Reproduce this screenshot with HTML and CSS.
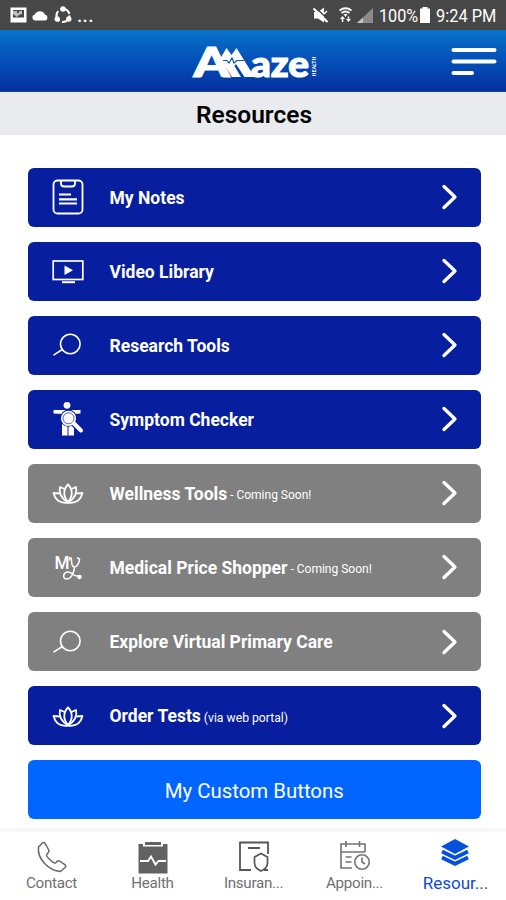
FILE: index.html
```html
<!DOCTYPE html>
<html lang="en">
<head>
<meta charset="utf-8">
<meta name="viewport" content="width=device-width, initial-scale=1">
<title>Resources</title>
<link rel="stylesheet" href="styles.css">
</head>
<body>
<svg class="defs" width="0" height="0" aria-hidden="true">
  <symbol id="chevron" viewBox="0 0 18 28"><path d="M3 3.500 14 14 3 24.500" fill="none" stroke="#fff" stroke-width="3.300" stroke-linecap="round" stroke-linejoin="round"/></symbol>
  <symbol id="search" viewBox="0 0 32 36"><g fill="none" stroke="currentColor" stroke-width="1.600" stroke-linecap="round"><circle cx="18.300" cy="17" r="9.800"/><path d="M10.300 22.500 2 27.800"/></g></symbol>
  <symbol id="lotus" viewBox="0 0 32 36"><g fill="none" stroke="currentColor" stroke-width="1.800" stroke-linejoin="round"><path d="M16 9.500c5 5 5 12 0 17.500-5-5.500-5-12.500 0-17.500Z"/><path d="M12.500 14 8 12c-1.500 6 1 11 8 15.500M19.500 14l4.500-2c1.500 6-1 11-8 15.500"/><path d="M7.800 18.500 1.500 18c1.500 6 6 9.800 12 9.800h5c6 0 10.500-3.800 12-9.800l-6.300.5"/></g></symbol>
</svg>
<div class="status">
  <div class="status-left">
    <svg width="17" height="16" viewBox="0 0 17 16"><path fill="#fff" fill-rule="evenodd" d="M.5.500h16v15H.5zM3 3v7.500h11V3z"/><path fill="#fff" d="M3 4h4v2h2V4h3v3l-3 1-2 2-4-3z" opacity=".65"/></svg>
    <svg width="17" height="11" viewBox="0 0 17 11"><path fill="#fff" d="M3.500 10.500a3 3 0 0 1-.8-5.900A5.600 5.600 0 0 1 13 4.500a3.200 3.200 0 0 1 .7 6z"/></svg>
    <svg width="18" height="18" viewBox="0 0 18 18"><circle cx="9" cy="9.500" r="6.500" fill="none" stroke="#fff" stroke-width="2.200" stroke-dasharray="11 2.600"/><circle cx="9" cy="3" r="2.700" fill="#fff"/><circle cx="3.200" cy="13" r="2.700" fill="#fff"/><circle cx="14.800" cy="13" r="2.700" fill="#fff"/></svg>
    <span class="dots">...</span>
  </div>
  <div class="status-right">
    <svg class="mute" width="17" height="17" viewBox="0 0 17 17"><path fill="#fff" d="M2 5h4l6-4.500v15L6 11.500H2z"/><path d="M3.500 .5 16.500 13" stroke="#474747" stroke-width="1.500"/><path d="M1.500 1.500 15.500 15" stroke="#fff" stroke-width="2.200"/><path d="m12 7 3-3" stroke="#fff" stroke-width="1.500"/></svg>
    <svg class="wifi" width="13" height="16" viewBox="0 0 13 16"><path d="M.5 3.500Q6.500-1 12.500 3.500M2.500 6q4-3 8 0" fill="none" stroke="#fff" stroke-width="1.800"/><path d="M4.500 7h4l-2 3zM3.500 9 1 12h1.800v3h1.500v-3H6zM9.500 15 7 12h1.700V9.500h1.600V12H12z" fill="#fff"/></svg>
    <svg class="signal" width="16" height="15" viewBox="0 0 16 15"><path d="M0 15 16 0v15z" fill="#8b8b8b"/><path d="M0 15l6-5.600V15z" fill="#c5c5c5"/></svg>
    <span class="percent">100%</span>
    <svg class="battery" width="10" height="16" viewBox="0 0 10 16"><path d="M2.500 0h5v1.500H10V16H0V1.500h2.500z" fill="#fff"/></svg>
    <span class="clock">9:24 PM</span>
  </div>
</div>
<header class="header">
  <svg class="logo" width="130" height="42" viewBox="0 0 130 42" role="img" aria-label="Amaze Health">
    <path d="M29 14 35.500 3 40.500 10 45.500 3 63.500 32H53.500L45 19l-1.500 2 6.500 11H41L33 19z"/>
    <path d="M27 15.500h9l2 2.500 3-5 2 5 3-2.500h7" fill="none" stroke="#0755bd" stroke-width="1.200"/>
    <text class="logo-a" x="2.500" y="31.500" font-size="41" textLength="36" lengthAdjust="spacingAndGlyphs">A</text>
    <text class="logo-text" x="60" y="31.500" font-size="36" textLength="58" lengthAdjust="spacingAndGlyphs">aze</text>
    <text class="logo-health" transform="translate(125 31.500) rotate(-90)" font-size="5.500" textLength="20" lengthAdjust="spacingAndGlyphs">HEALTH</text>
  </svg>
  <svg class="menu" width="46" height="30" viewBox="0 0 46 30"><path d="M2.500 3h41M2.500 14.500h41M2.500 26H21" stroke="#fff" stroke-width="4" stroke-linecap="round"/></svg>
</header>
<h1 class="title">Resources</h1>
<main class="list">
  <a class="row"><svg class="icon" viewBox="0 0 32 36"><g fill="none" stroke="currentColor" stroke-width="1.800"><rect x="1.500" y="1.500" width="29" height="33" rx="4"/><path d="M9 1.500v3q0 3 3 3h8q3 0 3-3v-3"/><path d="M7 15.500h12M7 20.300h18M7 24.500h18" stroke-width="2.200"/></g></svg><span class="label">My Notes</span><svg class="chev"><use href="#chevron"/></svg></a>
  <a class="row"><svg class="icon" viewBox="0 0 32 36"><rect x="1.200" y="8" width="29.600" height="18.500" fill="none" stroke="currentColor" stroke-width="1.700"/><path d="M12.500 12.500v9.500l8.500-4.700z" fill="currentColor"/><path d="M10 29.200h13" stroke="currentColor" stroke-width="2"/></svg><span class="label">Video Library</span><svg class="chev"><use href="#chevron"/></svg></a>
  <a class="row"><svg class="icon"><use href="#search"/></svg><span class="label">Research Tools</span><svg class="chev"><use href="#chevron"/></svg></a>
  <a class="row"><svg class="icon" viewBox="0 0 32 36"><g fill="currentColor"><circle cx="15" cy="4.300" r="3.400"/><path d="M1.500 9h27v3.500L22 13v21.500h-5.500V25h-1v9.500H10V13l-8.500-.5z"/></g><circle cx="16.500" cy="17.300" r="6.800" fill="#fff" stroke="#071e9f" stroke-width="3.400"/><circle cx="16.500" cy="17.300" r="6.700" fill="#fff" stroke="#fff" stroke-width="1.800"/><circle cx="16.500" cy="17.300" r="5.500" fill="none" stroke="#4c5bba" stroke-width="1"/><path d="m22 23 7.500 7" stroke="#071e9f" stroke-width="6"/><path d="m22 22.500 7 7" stroke="#fff" stroke-width="4" stroke-linecap="round"/></svg><span class="label">Symptom Checker</span><svg class="chev"><use href="#chevron"/></svg></a>
  <a class="row off"><svg class="icon"><use href="#lotus"/></svg><span class="label">Wellness Tools</span><span class="note">- Coming Soon!</span><svg class="chev"><use href="#chevron"/></svg></a>
  <a class="row off"><svg class="icon" viewBox="0 0 32 36"><text class="my" x="2.500" y="20" font-size="19" fill="currentColor" textLength="15" lengthAdjust="spacingAndGlyphs">M</text><g fill="none" stroke="currentColor" stroke-width="1.500" stroke-linecap="round"><path d="M17.500 11c-1-3 2-3 2 0 0 4 1 7 3 7s5-4 5-8l-2-1M22.500 18c0 4-3 12-7.500 12-5 0-4-6 0-7 5-1 6 5 11 4"/><circle cx="27.500" cy="28" r="1.500" fill="currentColor"/></g></svg><span class="label">Medical Price Shopper</span><span class="note">- Coming Soon!</span><svg class="chev"><use href="#chevron"/></svg></a>
  <a class="row off"><svg class="icon"><use href="#search"/></svg><span class="label">Explore Virtual Primary Care</span><svg class="chev"><use href="#chevron"/></svg></a>
  <a class="row"><svg class="icon"><use href="#lotus"/></svg><span class="label">Order Tests</span><span class="note portal">(via web portal)</span><svg class="chev"><use href="#chevron"/></svg></a>
  <a class="row custom">My Custom Buttons</a>
</main>
<nav class="tabs">
  <a class="tab"><svg width="34" height="34" viewBox="0 0 34 34"><path d="M7.500 3 3.500 7C2 19 14 31 25.500 31.500l5-4.500c.8-1-.2-2-1-2.600l-5-3.400c-1.500-.8-2.500.3-4 2-1.500 1-9.500-6.500-9-8 .6-2 3-2.500 2.500-4.500L10.500 4C9.500 2.300 8.500 2 7.500 3Z" fill="none" stroke="#666" stroke-width="1.500" stroke-linejoin="round"/></svg><span>Contact</span></a>
  <a class="tab"><svg width="34" height="34" viewBox="0 0 34 34"><path fill="#626262" d="M2.500 4h4.500v2.500h20V4h4.500v29.500h-29zM9 2h16v3H9z"/><path d="M4 21h8l3-4.500 4.500 8 3-3.500H30" fill="none" stroke="#fff" stroke-width="1.900"/></svg><span>Health</span></a>
  <a class="tab"><svg width="34" height="34" viewBox="0 0 34 34"><path d="M14 30H3V2.500h28V14M27 30h4M11 8h12" fill="none" stroke="#555" stroke-width="1.800"/><path d="m24 13.500 6.500 3.500v6c0 4-3 6.500-6.500 8-3.500-1.500-6.500-4-6.500-8v-6z" fill="#fff" stroke="#555" stroke-width="1.700"/></svg><span>Insuran...</span></a>
  <a class="tab"><svg width="34" height="34" viewBox="0 0 34 34"><g fill="none" stroke="#747474" stroke-width="1.600"><path d="M14 28H3V4h24v8M3 12h24M8 1v6M21.500 1v6M7.500 17h6M7.500 22h6"/><circle cx="24" cy="22" r="7.200" fill="#fff"/><path d="M24 17.500V22l3 2"/></g></svg><span>Appoin...</span></a>
  <a class="tab active"><svg width="34" height="34" viewBox="0 0 34 34"><path fill="#084fdc" d="m16 0 14 7.500-14 7.500L2 7.500z"/><path d="m3 12.500 13 6.300 13-6.300M3 18.500l13 6.300 13-6.300" fill="none" stroke="#084fdc" stroke-width="3.800"/></svg><span>Resour...</span></a>
</nav>
</body>
</html>
```
FILE: styles.css
```css
* { box-sizing: border-box; }
body { margin: 0; width: 506px; height: 900px; overflow: hidden; display: flex; flex-direction: column; background: #fff; font-family: Roboto, "Liberation Sans", sans-serif; }
.defs { position: absolute; }
.status { flex: none; height: 30px; background: #474747; color: #fff; display: flex; justify-content: space-between; padding: 0 11px 0 10px; font-size: 18px; }
.status-left, .status-right { display: flex; align-items: center; height: 30px; }
.status-left { gap: 5px; }
.dots { font-size: 19px; font-weight: 500; margin-top: 1px; letter-spacing: .3px; }
.mute { margin-right: 10px; }
.wifi { margin-right: 5px; }
.signal { margin-right: 6px; }
.percent { width: 38px; display: block; transform: scaleX(.9); transform-origin: left; margin-right: 3px; }
.battery { margin-right: 6px; }
.clock { width: 59px; white-space: nowrap; transform: scaleX(.91); transform-origin: left; }
.percent, .clock { line-height: 28px; padding-top: 2px; }
.header { flex: none; height: 62px; background: linear-gradient(#0873c9, #044fb9 50%, #04319f); display: flex; justify-content: space-between; align-items: flex-start; padding: 15px 9px 0 191px; border-bottom: 1px solid #2040a0; }
.logo { fill: #fff; overflow: visible; }
.logo-a, .logo-text, .logo-health { font-family: Lato, sans-serif; font-weight: 900; }
.logo-a, .logo-text { stroke: #fff; stroke-width: 1.200px; }
.my { font-family: Roboto, sans-serif; font-weight: 500; }
.menu { margin-top: 2px; }
.title { flex: none; height: 43px; margin: 0; background: #eaebef; text-align: center; font-size: 24.500px; line-height: 45px; font-weight: 600; color: #050505; padding-left: 2px; }
.list { flex: none; height: 693px; padding: 32.500px 25.500px 0 28px; display: flex; flex-direction: column; gap: 15.100px; }
.row { flex: 0 0 59px; display: flex; align-items: center; border-radius: 6px; background: #071e9f; color: #fff; padding: 0 22px 0 24px; white-space: nowrap; }
.row.off { background: #808080; }
.row.custom { background: #0066ff; justify-content: center; font-size: 20.400px; padding: 2px 0 0; }
.icon { width: 32px; height: 36px; margin-right: 25.500px; flex: none; }
.label { font-size: 17.500px; font-weight: 700; padding-top: 1px; }
.note { font-size: 12px; margin-left: 3px; padding-top: 4px; }
.portal { font-size: 12.200px; }
.chev { width: 18px; height: 28px; margin-left: auto; flex: none; }
.tabs { flex: 1; border-top: 4px solid #f7f7f7; display: flex; padding-top: 8px; }
.tab { width: 101px; display: flex; flex-direction: column; align-items: center; color: #707070; font-size: 15.200px; line-height: 18px; letter-spacing: -.3px; padding-left: 2px; }
.tab span { white-space: nowrap; }
.tab.active { color: #1147dc; font-size: 17px; letter-spacing: 0; }
.tab.active svg { margin-top: -1px; margin-bottom: 1px; }
```
